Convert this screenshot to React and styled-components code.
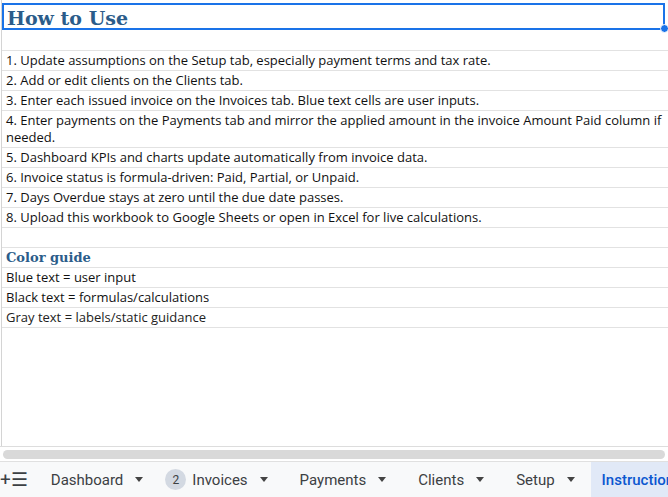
import React from 'react';
import styled, { createGlobalStyle } from 'styled-components';

const Global = createGlobalStyle`
  html, body { margin: 0; padding: 0; background: #fff; }
  body { width: 668px; height: 497px; overflow: hidden; }
`;

const Page = styled.div`
  display: flex;
  flex-direction: column;
  width: 668px;
  height: 497px;
  overflow: hidden;
`;

const Grid = styled.div`
  flex: 1;
  border-left: 1px solid #d4d4d4;
  margin-left: 1px;
  display: flex;
  flex-direction: column;
  overflow: hidden;
  padding-top: 3px;
`;

const Row = styled.div`
  position: relative;
  height: ${p => p.$h || 20}px;
  box-sizing: border-box;
  border-bottom: ${p => p.$plain ? 'none' : '1px solid #e2e2e2'};
  display: flex;
  align-items: flex-end;
  padding: 0 0 1px 4px;
  font-family: "Open Sans", "Noto Sans", sans-serif;
  font-size: 13px;
  line-height: 17px;
  color: ${p => p.$gray ? '#222' : '#111'};
  flex-shrink: 0;
`;

const TitleRow = styled(Row)`
  border: 2px solid #1a73e8;
  font-family: "DejaVu Serif", "Liberation Serif", serif;
  font-weight: 700;
  font-size: 19px;
  color: #2b5c8a;
  padding: 0 0 1px 3px;
  margin-right: 3px;
`;

const Handle = styled.span`
  position: absolute;
  right: -6px;
  bottom: -5px;
  width: 7px;
  height: 7px;
  border-radius: 50%;
  background: #1a73e8;
  border: 1px solid #fff;
`;

const Heading = styled(Row)`
  font-family: "DejaVu Serif", "Liberation Serif", serif;
  font-weight: 700;
  font-size: 13px;
  color: #2b5c8a;
`;

const Scroll = styled.div`
  height: 14px;
  border-top: 1px solid #ddd;
  background: #fff;
  display: flex;
  align-items: center;
  padding: 0 3px;
  span { flex: 1; height: 9px; background: #d9d9d9; border-radius: 5px; }
`;

const Tabs = styled.div`
  height: 35px;
  background: #f8f9fa;
  border-top: 1px solid #e0e0e0;
  display: flex;
  align-items: center;
  font-family: Roboto, "Noto Sans", sans-serif;
  font-size: 15px;
  color: #3c4043;
`;

const Icon = styled.span`
  width: ${p => p.$w}px;
  text-align: center;
  font-size: 19px;
`;

const Tab = styled.div`
  display: flex;
  align-items: center;
  height: 100%;
  padding: 0 ${p => p.$pr ?? 16}px 0 ${p => p.$pl ?? 16}px;
  gap: 10px;
  background: ${p => p.$active ? '#e1e9f7' : 'transparent'};
  color: ${p => p.$active ? '#0b57d0' : '#3c4043'};
  font-weight: ${p => p.$active ? 500 : 400};
  white-space: nowrap;
`;

const Caret = styled.span`
  width: 0; height: 0;
  margin-left: 2px;
  border-left: 4px solid transparent;
  border-right: 4px solid transparent;
  border-top: 5px solid #444;
`;

const Badge = styled.span`
  width: 21px; height: 21px;
  border-radius: 11px;
  background: #d3d9e2;
  font-size: 12px;
  display: flex; align-items: center; justify-content: center;
  margin-right: -4px;
`;

const steps = [
  '1. Update assumptions on the Setup tab, especially payment terms and tax rate.',
  '2. Add or edit clients on the Clients tab.',
  '3. Enter each issued invoice on the Invoices tab. Blue text cells are user inputs.',
  null,
  '5. Dashboard KPIs and charts update automatically from invoice data.',
  '6. Invoice status is formula-driven: Paid, Partial, or Unpaid.',
  '7. Days Overdue stays at zero until the due date passes.',
  '8. Upload this workbook to Google Sheets or open in Excel for live calculations.',
];

export default function App() {
  return (
    <Page>
      <Global />
      <Grid>
        <TitleRow $h={27}>How to Use<Handle /></TitleRow>
        <Row $h={21} />
        {steps.map((s, i) => s ? <Row key={i}>{s}</Row> : (
          <Row key={i} $h={37} style={{ alignItems: 'flex-start', paddingTop: 1 }}>
            4. Enter payments on the Payments tab and mirror the applied amount in the invoice Amount Paid column if needed.
          </Row>
        ))}
        <Row />
        <Heading>Color guide</Heading>
        <Row>Blue text = user input</Row>
        <Row>Black text = formulas/calculations</Row>
        <Row $gray>Gray text = labels/static guidance</Row>
      </Grid>
      <Scroll><span /></Scroll>
      <Tabs>
        <Icon $w={36}>+</Icon>
        <Icon $w={44}>☰</Icon>
        <Tab $pl={23}>Dashboard <Caret /></Tab>
        <Tab $pl={6}><Badge>2</Badge>Invoices <Caret /></Tab>
        <Tab>Payments <Caret /></Tab>
        <Tab>Clients <Caret /></Tab>
        <Tab>Setup <Caret /></Tab>
        <Tab $active $pl={11}>Instructions</Tab>
      </Tabs>
    </Page>
  );
}
